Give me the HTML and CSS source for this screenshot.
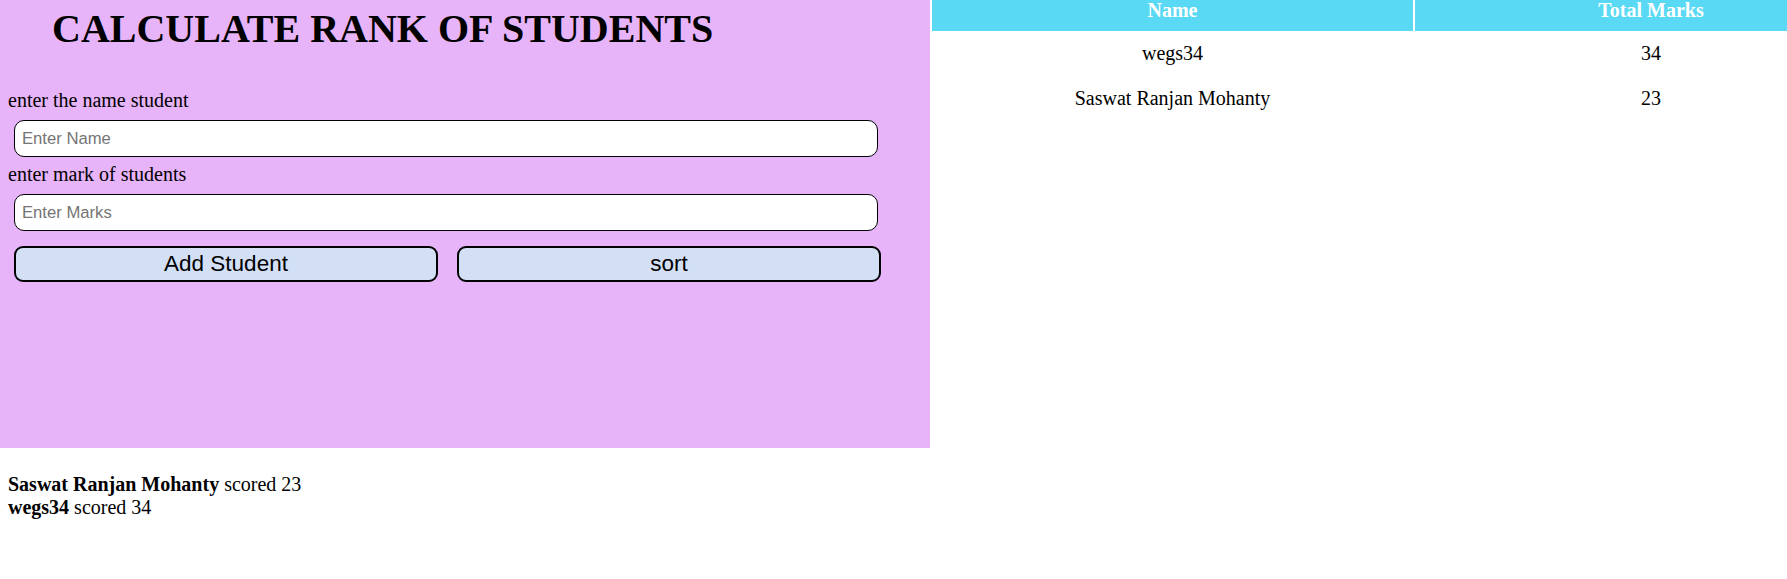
FILE: index.html
```html
<!DOCTYPE html>
<html lang="en">
<head>
<meta charset="utf-8">
<title>Calculate Rank of Students</title>
<link rel="stylesheet" href="styles.css">
</head>
<body>
<div class="page">
  <div class="top">
    <section class="panel">
      <h1 class="title">CALCULATE RANK OF STUDENTS</h1>
      <div class="form">
        <label class="lbl" for="name">enter the name student</label>
        <input class="field" id="name" type="text" placeholder="Enter Name">
        <label class="lbl lbl-second" for="marks">enter mark of students</label>
        <input class="field" id="marks" type="text" placeholder="Enter Marks">
        <div class="actions">
          <button class="btn" type="button">Add Student</button>
          <button class="btn" type="button">sort</button>
        </div>
      </div>
    </section>
    <table class="ranks">
      <thead>
        <tr><th class="col-name">Name</th><th class="col-marks">Total Marks</th></tr>
      </thead>
      <tbody>
        <tr><td>wegs34</td><td>34</td></tr>
        <tr><td>Saswat Ranjan Mohanty</td><td>23</td></tr>
      </tbody>
    </table>
  </div>
  <div class="results">
    <div class="result"><b>Saswat Ranjan Mohanty</b> scored 23</div>
    <div class="result"><b>wegs34</b> scored 34</div>
  </div>
</div>
</body>
</html>
```
FILE: styles.css
```css
html, body {
  margin: 0;
  padding: 0;
}
body {
  font-family: "Liberation Serif", "Times New Roman", serif;
  font-size: 20px;
  color: #000;
  background: #fff;
}
.page {
  width: 100%;
  overflow: hidden;
}
.top {
  display: flex;
  align-items: flex-start;
  overflow: hidden;
}
.panel {
  flex: 0 0 930px;
  height: 448px;
  background: #e7b4f9;
  display: flex;
  flex-direction: column;
}
.title {
  margin: 6px 0 0 52px;
  font-size: 40px;
  font-weight: bold;
  line-height: 46px;
}
.form {
  display: flex;
  flex-direction: column;
  padding-left: 8px;
  margin-top: 37px;
}
.lbl {
  line-height: 23px;
}
.lbl-second {
  margin-top: 6px;
}
.field {
  box-sizing: border-box;
  width: 864px;
  height: 37px;
  margin: 8px 0 0 6px;
  padding: 0 7px;
  border: 1.25px solid #000;
  border-radius: 10px;
  background: #fff;
  font-family: "Liberation Sans", Arial, sans-serif;
  font-size: 16.67px;
  color: #000;
  outline: none;
}
.field::placeholder {
  color: #757575;
}
.actions {
  display: flex;
  gap: 19px;
  margin: 15px 0 0 6px;
}
.btn {
  box-sizing: border-box;
  width: 424px;
  height: 36px;
  padding: 0;
  border: 2.5px solid #000;
  border-radius: 9px;
  background: #d3dff5;
  font-family: "Liberation Sans", Arial, sans-serif;
  font-size: 22.5px;
  color: #000;
}
.ranks {
  flex: none;
  border-collapse: separate;
  border-spacing: 2.5px 0;
}
.ranks th {
  height: 31px;
  padding: 0;
  background: #59d9f3;
  color: #fff;
  font-size: 20px;
  font-weight: bold;
  line-height: 20px;
  vertical-align: top;
  text-align: center;
}
.col-name {
  width: 481px;
}
.col-marks {
  width: 472px;
}
.ranks td {
  height: 45px;
  padding: 0;
  text-align: center;
  vertical-align: middle;
}
.results {
  padding: 25px 8px 0;
  line-height: 23px;
}
```
